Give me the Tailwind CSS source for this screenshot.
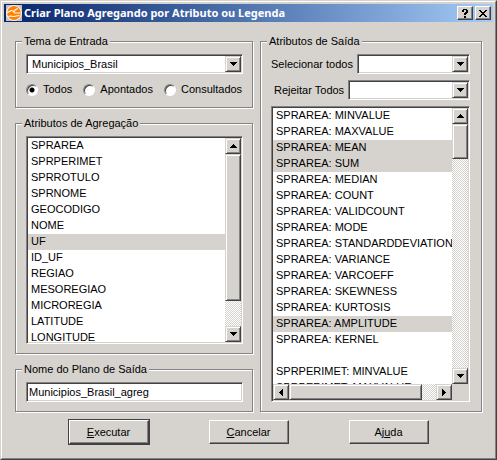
<!DOCTYPE html>
<html lang="pt-BR">
<head>
<meta charset="utf-8">
<meta name="viewport" content="width=device-width, initial-scale=1">
<title>Criar Plano Agregando por Atributo ou Legenda</title>
<script src="https://cdn.jsdelivr.net/npm/@tailwindcss/browser@4"></script>
</head>
<body class="bg-[#d6d3ce] font-['Liberation_Sans',Arial,sans-serif] text-[11px] leading-[15px] text-black">
<div class="border border-t-[#d6d3ce] border-l-[#d6d3ce] border-r-[#424142] border-b-[#424142]">
<div class="border border-t-white border-l-white border-r-[#848284] border-b-[#848284] p-0.5">

<header class="flex h-[18px] items-center bg-linear-to-r from-[#08246b] to-[#a5cbf7] pr-0.5 pl-0.5">
  <svg class="size-4 shrink-0" viewBox="0 0 16 16" aria-hidden="true">
    <rect width="16" height="16" fill="#c6c3c6"/>
    <circle cx="8" cy="8" r="7.8" fill="#fff"/>
    <circle cx="8" cy="8" r="6.9" fill="#ff8200"/>
    <path d="M1 7.500C3 7.500 4 5.500 6 5.500S7.500 8 9 8H14.500M7.500 7C8.500 5 10 4 12 3.500M2.500 11.500C5 10.500 6 11.500 8 11.500S11 10.500 13.500 10.500" fill="none" stroke="#fff" stroke-width="1.1"/>
  </svg>
  <h1 class="ml-0.5 flex-1 truncate font-['Noto_Sans',sans-serif] text-[11px] leading-[18px] font-bold text-white">Criar Plano Agregando por Atributo ou Legenda</h1>
  <div class="flex gap-0.5">
    <button type="button" aria-label="Ajuda" class="flex h-3.5 w-4 items-center justify-center border border-t-white border-l-white border-r-[#424142] border-b-[#424142] bg-[#d6d3ce] shadow-[inset_-1px_-1px_0_#848284]">
      <svg width="6" height="9" viewBox="0 0 6 9" shape-rendering="crispEdges" aria-hidden="true"><path d="M1 0h4v1h1v3h-1v1h-1v1h-2v-2h1v-1h1v-2h-2v2h-2v-2h1zM2 7h2v2h-2z"/></svg>
    </button>
    <button type="button" aria-label="Fechar" class="flex h-3.5 w-4 items-center justify-center border border-t-white border-l-white border-r-[#424142] border-b-[#424142] bg-[#d6d3ce] shadow-[inset_-1px_-1px_0_#848284]">
      <svg width="8" height="7" viewBox="0 0 8 7" shape-rendering="crispEdges" aria-hidden="true"><path d="M0 0h2v1h1v1h2v-1h1v-1h2v1h-1v1h-1v1h-1v1h1v1h1v1h1v1h-2v-1h-1v-1h-2v1h-1v1h-2v-1h1v-1h1v-1h1v-1h-1v-1h-1v-1h-1z"/></svg>
    </button>
  </div>
</header>

<form class="px-[11px] pt-3 pb-3">
<div class="grid grid-cols-[238fr_222fr] gap-x-[7px]">
  <div class="flex min-w-0 flex-col gap-2">
    <fieldset class="min-w-0 border border-[#848284] pt-[5px] pr-[9px] pb-[9px] pl-2.5 shadow-[1px_1px_0_#fff,inset_1px_1px_0_#fff]">
      <legend class="-ml-1 bg-[#d6d3ce] px-0.5">Tema de Entrada</legend>
      <div class="grid h-5 border border-t-[#848284] border-l-[#848284] border-r-white border-b-white bg-white p-px shadow-[inset_1px_1px_0_#424142,inset_-1px_-1px_0_#d6d3ce]">
        <select aria-label="Tema de Entrada" class="col-start-1 row-start-1 w-full appearance-none pl-1"><option>Municipios_Brasil</option></select>
        <span class="pointer-events-none col-start-1 row-start-1 flex w-4 items-center justify-center justify-self-end border border-t-[#d6d3ce] border-l-[#d6d3ce] border-r-[#424142] border-b-[#424142] bg-[#d6d3ce] shadow-[inset_1px_1px_0_#fff,inset_-1px_-1px_0_#848284]"><svg width="7" height="4" viewBox="0 0 7 4" shape-rendering="crispEdges" aria-hidden="true"><path d="M0 0h7v1h-1v1h-1v1h-1v1h-1v-1h-1v-1h-1v-1h-1z"/></svg></span>
      </div>
      <div class="mt-[7px] flex gap-[11px] leading-[17px]">
        <label class="flex items-center gap-[5px]"><input type="radio" name="escopo" checked class="size-3 appearance-none rounded-full border border-t-[#848284] border-l-[#848284] border-r-white border-b-white bg-white shadow-[inset_1px_1px_0_#424142] checked:bg-[radial-gradient(circle,#000_2px,#fff_3px)]">Todos</label>
        <label class="flex items-center gap-[5px]"><input type="radio" name="escopo" class="size-3 appearance-none rounded-full border border-t-[#848284] border-l-[#848284] border-r-white border-b-white bg-white shadow-[inset_1px_1px_0_#424142] checked:bg-[radial-gradient(circle,#000_2px,#fff_3px)]">Apontados</label>
        <label class="flex items-center gap-[5px]"><input type="radio" name="escopo" class="size-3 appearance-none rounded-full border border-t-[#848284] border-l-[#848284] border-r-white border-b-white bg-white shadow-[inset_1px_1px_0_#424142] checked:bg-[radial-gradient(circle,#000_2px,#fff_3px)]">Consultados</label>
      </div>
    </fieldset>

    <fieldset class="min-w-0 border border-[#848284] pt-[5px] pr-[9px] pb-[9px] pl-2.5 shadow-[1px_1px_0_#fff,inset_1px_1px_0_#fff]">
      <legend class="-ml-1 bg-[#d6d3ce] px-0.5">Atributos de Agregação</legend>
      <div class="flex h-52 border border-t-[#848284] border-l-[#848284] border-r-white border-b-white bg-white p-px shadow-[inset_1px_1px_0_#424142,inset_-1px_-1px_0_#d6d3ce]">
        <select multiple size="13" aria-label="Atributos de Agregação" class="h-full min-w-0 flex-1 appearance-none overflow-hidden [scrollbar-width:none] [&>option]:h-4 [&>option]:pt-px [&>option]:pb-0 [&>option]:pr-0 [&>option]:pl-[3px] [&>option:checked]:bg-[linear-gradient(#d6d3ce,#d6d3ce)] [&>option:checked]:text-black">
          <option>SPRAREA</option><option>SPRPERIMET</option><option>SPRROTULO</option><option>SPRNOME</option><option>GEOCODIGO</option><option>NOME</option><option selected>UF</option><option>ID_UF</option><option>REGIAO</option><option>MESOREGIAO</option><option>MICROREGIA</option><option>LATITUDE</option><option>LONGITUDE</option>
        </select>
        <div class="flex w-4 flex-col bg-[repeating-conic-gradient(#fff_0_25%,#d6d3ce_0_50%)] bg-size-[2px_2px]">
          <button type="button" tabindex="-1" aria-label="Rolar para cima" class="flex h-4 items-center justify-center border border-t-[#d6d3ce] border-l-[#d6d3ce] border-r-[#424142] border-b-[#424142] bg-[#d6d3ce] shadow-[inset_1px_1px_0_#fff,inset_-1px_-1px_0_#848284]"><svg width="7" height="4" viewBox="0 0 7 4" shape-rendering="crispEdges" aria-hidden="true"><path d="M0 4h7v-1h-1v-1h-1v-1h-1v-1h-1v1h-1v1h-1v1h-1z"/></svg></button>
          <div class="h-[147px] border border-t-[#d6d3ce] border-l-[#d6d3ce] border-r-[#424142] border-b-[#424142] bg-[#d6d3ce] shadow-[inset_1px_1px_0_#fff,inset_-1px_-1px_0_#848284]"></div>
          <button type="button" tabindex="-1" aria-label="Rolar para baixo" class="mt-auto flex h-4 items-center justify-center border border-t-[#d6d3ce] border-l-[#d6d3ce] border-r-[#424142] border-b-[#424142] bg-[#d6d3ce] shadow-[inset_1px_1px_0_#fff,inset_-1px_-1px_0_#848284]"><svg width="7" height="4" viewBox="0 0 7 4" shape-rendering="crispEdges" aria-hidden="true"><path d="M0 0h7v1h-1v1h-1v1h-1v1h-1v-1h-1v-1h-1v-1h-1z"/></svg></button>
        </div>
      </div>
    </fieldset>

    <fieldset class="min-w-0 border border-[#848284] pt-[5px] pr-[9px] pb-[9px] pl-2.5 shadow-[1px_1px_0_#fff,inset_1px_1px_0_#fff]">
      <legend class="-ml-1 bg-[#d6d3ce] px-0.5"><label for="nome">Nome do Plano de Saída</label></legend>
      <input id="nome" type="text" value="Municipios_Brasil_agreg" class="block h-5 w-full border border-t-[#848284] border-l-[#848284] border-r-white border-b-white bg-white px-0.5 shadow-[inset_1px_1px_0_#424142,inset_-1px_-1px_0_#d6d3ce]">
    </fieldset>
  </div>

  <fieldset class="min-w-0 border border-[#848284] pt-[5px] pr-[11px] pb-[9px] pl-2.5 shadow-[1px_1px_0_#fff,inset_1px_1px_0_#fff]">
    <legend class="-ml-1 bg-[#d6d3ce] px-0.5">Atributos de Saída</legend>
    <div class="flex items-center gap-1">
      <label for="selecionar">Selecionar todos</label>
      <div class="grid h-5 flex-1 border border-t-[#848284] border-l-[#848284] border-r-white border-b-white bg-white p-px shadow-[inset_1px_1px_0_#424142,inset_-1px_-1px_0_#d6d3ce]">
        <select id="selecionar" class="col-start-1 row-start-1 w-full appearance-none pl-1"><option></option></select>
        <span class="pointer-events-none col-start-1 row-start-1 flex w-4 items-center justify-center justify-self-end border border-t-[#d6d3ce] border-l-[#d6d3ce] border-r-[#424142] border-b-[#424142] bg-[#d6d3ce] shadow-[inset_1px_1px_0_#fff,inset_-1px_-1px_0_#848284]"><svg width="7" height="4" viewBox="0 0 7 4" shape-rendering="crispEdges" aria-hidden="true"><path d="M0 0h7v1h-1v1h-1v1h-1v1h-1v-1h-1v-1h-1v-1h-1z"/></svg></span>
      </div>
    </div>
    <div class="mt-1.5 flex items-center gap-1 pl-[3px]">
      <label for="rejeitar">Rejeitar Todos</label>
      <div class="grid h-5 flex-1 border border-t-[#848284] border-l-[#848284] border-r-white border-b-white bg-white p-px shadow-[inset_1px_1px_0_#424142,inset_-1px_-1px_0_#d6d3ce]">
        <select id="rejeitar" class="col-start-1 row-start-1 w-full appearance-none pl-1"><option></option></select>
        <span class="pointer-events-none col-start-1 row-start-1 flex w-4 items-center justify-center justify-self-end border border-t-[#d6d3ce] border-l-[#d6d3ce] border-r-[#424142] border-b-[#424142] bg-[#d6d3ce] shadow-[inset_1px_1px_0_#fff,inset_-1px_-1px_0_#848284]"><svg width="7" height="4" viewBox="0 0 7 4" shape-rendering="crispEdges" aria-hidden="true"><path d="M0 0h7v1h-1v1h-1v1h-1v1h-1v-1h-1v-1h-1v-1h-1z"/></svg></span>
      </div>
    </div>
    <div class="mt-1.5 border border-t-[#848284] border-l-[#848284] border-r-white border-b-white bg-white p-px shadow-[inset_1px_1px_0_#424142,inset_-1px_-1px_0_#d6d3ce]">
      <div class="flex h-[276px]">
        <select multiple size="17" aria-label="Atributos de Saída" class="h-full min-w-0 flex-1 appearance-none overflow-hidden [scrollbar-width:none] [&>option]:h-4 [&>option]:min-h-4 [&>option]:pt-px [&>option]:pb-0 [&>option]:pr-0 [&>option]:pl-[3px] [&>option:checked]:bg-[linear-gradient(#d6d3ce,#d6d3ce)] [&>option:checked]:text-black">
          <option>SPRAREA: MINVALUE</option><option>SPRAREA: MAXVALUE</option><option selected>SPRAREA: MEAN</option><option selected>SPRAREA: SUM</option><option>SPRAREA: MEDIAN</option><option>SPRAREA: COUNT</option><option>SPRAREA: VALIDCOUNT</option><option>SPRAREA: MODE</option><option>SPRAREA: STANDARDDEVIATION</option><option>SPRAREA: VARIANCE</option><option>SPRAREA: VARCOEFF</option><option>SPRAREA: SKEWNESS</option><option>SPRAREA: KURTOSIS</option><option selected>SPRAREA: AMPLITUDE</option><option>SPRAREA: KERNEL</option><option></option><option>SPRPERIMET: MINVALUE</option><option>SPRPERIMET: MAXVALUE</option>
        </select>
        <div class="flex w-4 flex-col bg-[repeating-conic-gradient(#fff_0_25%,#d6d3ce_0_50%)] bg-size-[2px_2px]">
          <button type="button" tabindex="-1" aria-label="Rolar para cima" class="flex h-4 items-center justify-center border border-t-[#d6d3ce] border-l-[#d6d3ce] border-r-[#424142] border-b-[#424142] bg-[#d6d3ce] shadow-[inset_1px_1px_0_#fff,inset_-1px_-1px_0_#848284]"><svg width="7" height="4" viewBox="0 0 7 4" shape-rendering="crispEdges" aria-hidden="true"><path d="M0 4h7v-1h-1v-1h-1v-1h-1v-1h-1v1h-1v1h-1v1h-1z"/></svg></button>
          <div class="h-[35px] border border-t-[#d6d3ce] border-l-[#d6d3ce] border-r-[#424142] border-b-[#424142] bg-[#d6d3ce] shadow-[inset_1px_1px_0_#fff,inset_-1px_-1px_0_#848284]"></div>
          <button type="button" tabindex="-1" aria-label="Rolar para baixo" class="mt-auto flex h-4 items-center justify-center border border-t-[#d6d3ce] border-l-[#d6d3ce] border-r-[#424142] border-b-[#424142] bg-[#d6d3ce] shadow-[inset_1px_1px_0_#fff,inset_-1px_-1px_0_#848284]"><svg width="7" height="4" viewBox="0 0 7 4" shape-rendering="crispEdges" aria-hidden="true"><path d="M0 0h7v1h-1v1h-1v1h-1v1h-1v-1h-1v-1h-1v-1h-1z"/></svg></button>
        </div>
      </div>
      <div class="flex h-4 bg-[#d6d3ce] pr-4">
        <div class="flex flex-1 bg-[repeating-conic-gradient(#fff_0_25%,#d6d3ce_0_50%)] bg-size-[2px_2px]">
          <button type="button" tabindex="-1" aria-label="Rolar para a esquerda" class="flex w-4 items-center justify-center border border-t-[#d6d3ce] border-l-[#d6d3ce] border-r-[#424142] border-b-[#424142] bg-[#d6d3ce] shadow-[inset_1px_1px_0_#fff,inset_-1px_-1px_0_#848284]"><svg width="4" height="7" viewBox="0 0 4 7" shape-rendering="crispEdges" aria-hidden="true"><path d="M4 0v7h-1v-1h-1v-1h-1v-1h-1v-1h1v-1h1v-1h1v-1z"/></svg></button>
          <div class="w-[133px] border border-t-[#d6d3ce] border-l-[#d6d3ce] border-r-[#424142] border-b-[#424142] bg-[#d6d3ce] shadow-[inset_1px_1px_0_#fff,inset_-1px_-1px_0_#848284]"></div>
          <button type="button" tabindex="-1" aria-label="Rolar para a direita" class="ml-auto flex w-4 items-center justify-center border border-t-[#d6d3ce] border-l-[#d6d3ce] border-r-[#424142] border-b-[#424142] bg-[#d6d3ce] shadow-[inset_1px_1px_0_#fff,inset_-1px_-1px_0_#848284]"><svg width="4" height="7" viewBox="0 0 4 7" shape-rendering="crispEdges" aria-hidden="true"><path d="M0 0v7h1v-1h1v-1h1v-1h1v-1h-1v-1h-1v-1h-1v-1z"/></svg></button>
        </div>
      </div>
    </div>
  </fieldset>
</div>

<div class="flex justify-center gap-[60px] pt-2">
  <button type="submit" class="h-6 w-20 border border-t-white border-l-white border-r-[#424142] border-b-[#424142] shadow-[inset_-1px_-1px_0_#848284,0_0_0_1px_#424142]"><u>E</u>xecutar</button>
  <button type="button" class="h-6 w-20 border border-t-white border-l-white border-r-[#424142] border-b-[#424142] shadow-[inset_-1px_-1px_0_#848284]"><u>C</u>ancelar</button>
  <button type="button" class="h-6 w-20 border border-t-white border-l-white border-r-[#424142] border-b-[#424142] shadow-[inset_-1px_-1px_0_#848284]">Aj<u>u</u>da</button>
</div>
</form>
</div>
</div>
</body>
</html>
